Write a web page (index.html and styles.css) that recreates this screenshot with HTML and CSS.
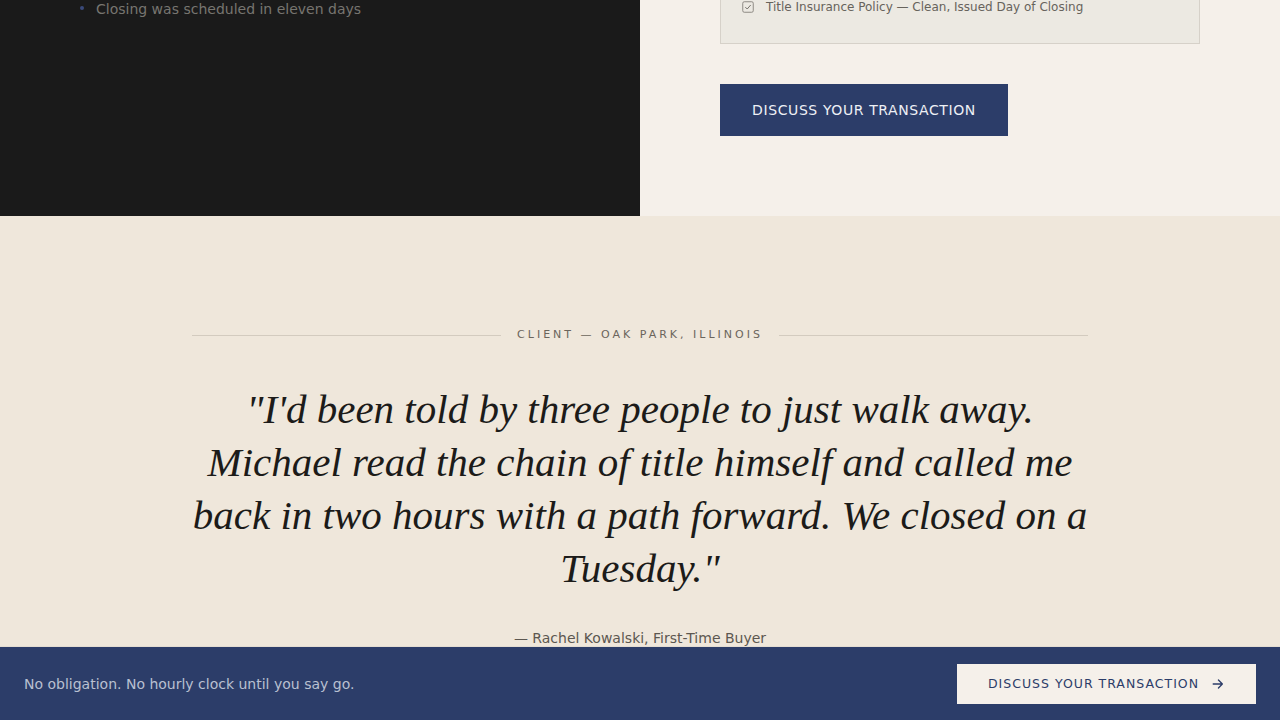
FILE: index.html
```html
<!DOCTYPE html>
<html lang="en">
<head>
<meta charset="utf-8">
<title>Testimonial</title>
<link rel="stylesheet" href="styles.css">
</head>
<body>
<section class="split">
  <div class="split-left">
    <ul class="facts">
      <li>Closing was scheduled in eleven days</li>
    </ul>
  </div>
  <div class="split-right">
    <div class="checklist">
      <div class="check-item">
        <svg class="check-icon" viewBox="0 0 12 12" width="12" height="12" aria-hidden="true">
          <rect x="0.75" y="0.75" width="10.5" height="10.5" rx="1.5" fill="none" stroke="#8e8a84" stroke-width="1"/>
          <path d="M3.3 6.1 L5.2 8 L8.7 4" fill="none" stroke="#77736d" stroke-width="1"/>
        </svg>
        <span>Title Insurance Policy — Clean, Issued Day of Closing</span>
      </div>
    </div>
    <a class="btn-primary" href="#">DISCUSS YOUR TRANSACTION</a>
  </div>
</section>

<section class="testimonial">
  <div class="testimonial-inner">
    <div class="eyebrow">
      <span class="rule"></span>
      <span class="eyebrow-text">CLIENT — OAK PARK, ILLINOIS</span>
      <span class="rule"></span>
    </div>
    <blockquote class="quote">"I'd been told by three people to just walk away. Michael read the chain of title himself and called me back in two hours with a path forward. We closed on a Tuesday."</blockquote>
    <p class="attribution">— Rachel Kowalski, First-Time Buyer</p>
  </div>
</section>

<div class="sticky-bar">
  <p class="sticky-text">No obligation. No hourly clock until you say go.</p>
  <a class="btn-light" href="#">DISCUSS YOUR TRANSACTION
    <svg class="arrow" viewBox="0 0 16 16" width="14" height="14" aria-hidden="true">
      <path d="M2.5 8 H13 M8.5 3.5 L13 8 L8.5 12.5" fill="none" stroke="#2c3d69" stroke-width="1.5" stroke-linecap="round" stroke-linejoin="round"/>
    </svg>
  </a>
</div>
</body>
</html>
```

FILE: styles.css
```css
* { box-sizing: border-box; }
html, body { margin: 0; padding: 0; }
body {
  font-family: "DejaVu Sans", sans-serif;
  background: #efe7db;
  color: #1c1b19;
  height: 720px;
  overflow: hidden;
}
.split {
  display: grid;
  grid-template-columns: 640px 640px;
  height: 216px;
}
.split-left {
  background: #1a1a1a;
  padding: 0 0 0 80px;
}
.facts {
  list-style: none;
  margin: 0;
  padding: 0;
}
.facts li {
  position: relative;
  padding-left: 16px;
  font-size: 14px;
  line-height: 18px;
  color: #777570;
}
.facts li::before {
  content: "";
  position: absolute;
  left: 0;
  top: 6px;
  width: 4px;
  height: 4px;
  border-radius: 50%;
  background: #3a4a7a;
}
.split-right {
  background: #f5f0ea;
  padding: 0 80px;
  display: flex;
  flex-direction: column;
  align-items: flex-start;
}
.checklist {
  width: 480px;
  background: #ece9e2;
  border: 1px solid #d6d1c9;
  border-top: none;
  padding: 0 26px 0 20px;
  height: 44px;
}
.check-item {
  display: flex;
  align-items: center;
  gap: 12px;
  font-size: 12px;
  line-height: 14px;
  color: #67635c;
}
.check-icon { flex: none; margin-left: 1px; }
.btn-primary {
  margin-top: 40px;
  display: inline-flex;
  align-items: center;
  justify-content: center;
  width: 288px;
  height: 52px;
  background: #2c3d69;
  color: #eef0f5;
  font-size: 14px;
  letter-spacing: 0.6px;
  text-decoration: none;
}
.testimonial {
  padding-top: 110px;
}
.testimonial-inner {
  width: 896px;
  margin: 0 auto;
  text-align: center;
}
.eyebrow {
  display: flex;
  align-items: center;
  gap: 16px;
}
.rule {
  flex: 1;
  height: 1px;
  background: #d3cbbf;
}
.eyebrow-text {
  font-size: 11px;
  letter-spacing: 3px;
  color: #6b655c;
  line-height: 18px;
}
.quote {
  margin: 39px 0 0;
  font-family: "Liberation Serif", serif;
  font-style: italic;
  font-size: 41px;
  line-height: 53px;
  color: #1c1b19;
}
.attribution {
  margin: 34px 0 0;
  font-size: 14px;
  line-height: 18px;
  color: #5c5750;
}
.sticky-bar {
  position: fixed;
  left: 0;
  right: 0;
  bottom: 0;
  height: 74px;
  background: #2c3d69;
  border-top: 1px solid #e4ddd2;
  display: flex;
  align-items: center;
  justify-content: space-between;
  padding: 0 24px;
}
.sticky-text {
  margin: 0;
  font-size: 14px;
  color: #b9c0d1;
}
.btn-light {
  display: inline-flex;
  align-items: center;
  gap: 12px;
  width: 299px;
  height: 40px;
  justify-content: center;
  background: #f5f0ea;
  color: #2c3d69;
  font-size: 12.5px;
  letter-spacing: 1px;
  text-decoration: none;
}
.arrow { flex: none; }
```
